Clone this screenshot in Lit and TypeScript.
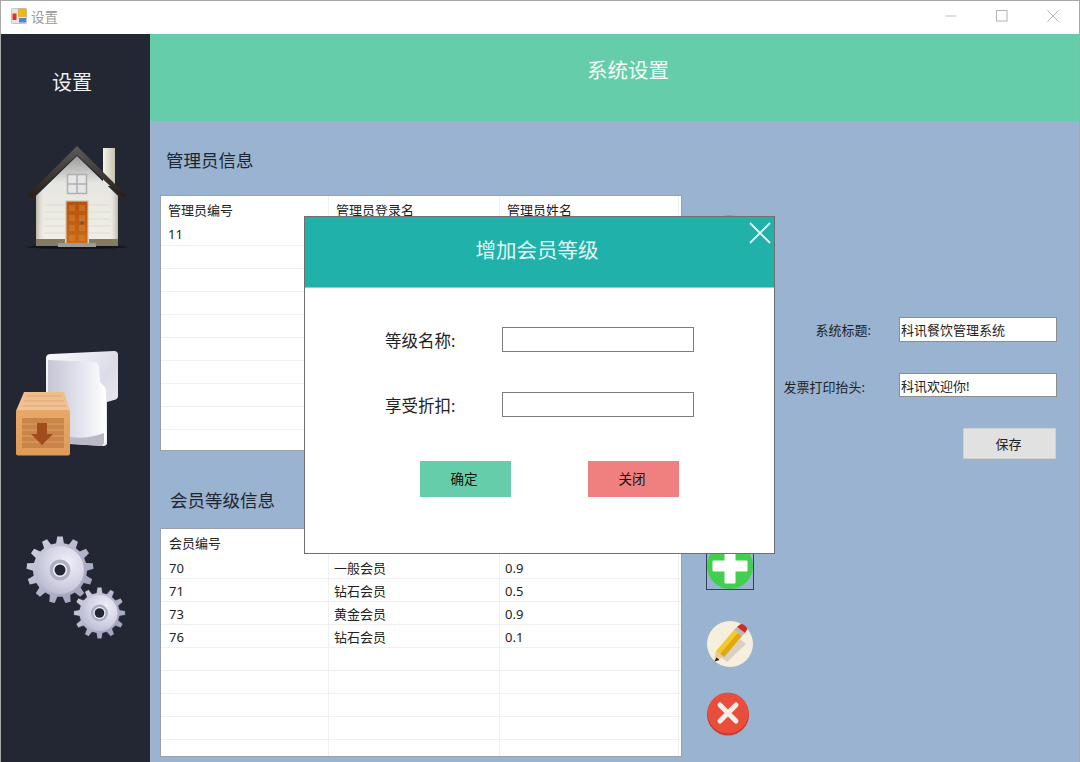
import { LitElement, html, css } from "lit";
import { customElement } from "lit/decorators.js";

const gear = (cx: number, cy: number, ro: number, ri: number, n: number) => {
  const pts: string[] = [];
  const step = (Math.PI * 2) / n;
  const pt = (r: number, a: number) => `${(cx + r * Math.cos(a)).toFixed(2)} ${(cy + r * Math.sin(a)).toFixed(2)}`;
  for (let i = 0; i < n; i++) {
    const a = i * step - Math.PI / 2;
    pts.push(pt(ri, a - step * 0.3), pt(ro, a - step * 0.17), pt(ro, a + step * 0.17), pt(ri, a + step * 0.3));
  }
  return `M${pts.join("L")}Z`;
};

const admin = [["11"], [], [], [], [], [], [], [], []];
const members = [
  ["70", "一般会员", "0.9"],
  ["71", "钻石会员", "0.5"],
  ["73", "黄金会员", "0.9"],
  ["76", "钻石会员", "0.1"],
  [], [], [], [], [],
];

@customElement("app-root")
export class AppRoot extends LitElement {
  static styles = css`
    :host {
      display: block;
      position: relative;
      width: 1080px;
      height: 762px;
      overflow: hidden;
      font-family: "Noto Sans", "Noto Sans CJK SC", sans-serif;
      color: #222;
    }
    * { box-sizing: border-box; }
    .window {
      width: 1080px;
      height: 762px;
      display: flex;
      flex-direction: column;
      border: 1px solid #a8a8a8;
      border-bottom: 0;
    }
    .titlebar {
      height: 33px;
      flex: none;
      background: #fff;
      display: flex;
      align-items: center;
      padding: 0 20px 3px 10px;
      font-size: 13.5px;
      color: #999;
    }
    .app-icon { margin-right: 4px; }
    .spacer { flex: 1; }
    .ctl { display: block; margin-left: 39px; }
    .body { flex: 1; display: flex; min-height: 0; }
    .sidebar {
      width: 149px;
      flex: none;
      background: #232733;
      display: flex;
      flex-direction: column;
      color: #eef0f2;
    }
    .side-title { font-size: 20px; line-height: 28px; text-align: center; margin: 35px 7px 0 0; }
    .sidebar svg { display: block; flex: none; }
    .ic-house { margin: 43px 0 0 21px; }
    .ic-box { margin: 95px 0 0 9px; }
    .ic-gear { margin: 72px 0 0 19px; }
    .main { flex: 1; min-width: 0; display: flex; flex-direction: column; background: #99b3d1; }
    .banner {
      height: 87px;
      flex: none;
      background: #66cdaa;
      color: #f4fbf8;
      font-size: 20.5px;
      display: flex;
      align-items: center;
      justify-content: center;
      padding: 0 0 17px 27px;
    }
    .content { flex: 1; display: flex; min-height: 0; padding-left: 10px; }
    .tables { width: 522px; flex: none; display: flex; flex-direction: column; }
    .sec { font-size: 17.5px; line-height: 24px; color: #1f2530; }
    .sec-a { margin: 27px 0 23px 6px; }
    .sec-b { margin: 37px 0 16px 10px; }
    .grid { background: #fff; border: 1px solid #9a9fa8; overflow: hidden; font-size: 13px; flex: none; }
    .grid-a { height: 256px; }
    .grid-b { height: 229px; }
    .row { display: grid; grid-template-columns: 168px 171px 179px; height: 23px; line-height: 22px; border-bottom: 1px solid #f0f0f0; }
    .grid-b .row { line-height: 24px; }
    .row.head, .grid-b .row.head { height: 27px; line-height: 28px; border-bottom: 0; }
    .cell { padding-left: 7px; border-right: 1px solid #f0f0f0; white-space: nowrap; overflow: hidden; }
    .grid-b .cell { padding-left: 5px; }
    .grid-b .cell:first-child { padding-left: 8px; }
    .tools { width: 50px; flex: none; margin-left: 23px; padding-top: 94px; display: flex; flex-direction: column; }
    .tool { display: block; flex: none; }
    .top-plus { margin-left: 2px; }
    .plus-box { width: 48px; height: 48px; margin: 281px 0 0 1px; border: 1px solid #33415a; display: flex; align-items: center; justify-content: center; }
    .pencil { margin: 31px 0 0 2px; }
    .del { margin: 25px 0 0 2px; }
    .settings { flex: 1; padding: 196px 22px 0 0; display: flex; flex-direction: column; font-size: 13px; }
    .set-row { display: flex; justify-content: flex-end; height: 25px; }
    .set-row + .set-row { margin-top: 31px; height: 24px; }
    .lab-a { margin-right: 28px; line-height: 27px; }
    .lab-b { margin-right: 34px; line-height: 28px; }
    .set-input {
      width: 158px;
      height: 100%;
      border: 1px solid #8d8d8d;
      background: #fff;
      font: inherit;
      color: #222;
      padding: 0 1px;
      outline: none;
      border-radius: 0;
    }
    .save {
      align-self: flex-end;
      margin: 31px 1px 0 0;
      width: 93px;
      height: 31px;
      background: #e1e1e1;
      border: 1px solid #cfd0d0;
      font: inherit;
      color: #222;
      padding: 0 2px 0 0;
    }
    .modal {
      position: absolute;
      left: 304px;
      top: 216px;
      width: 471px;
      height: 338px;
      background: #fff;
      border: 1px solid #6f6f6f;
      display: flex;
      flex-direction: column;
    }
    .modal-head {
      position: relative;
      height: 71px;
      flex: none;
      background: #20b2aa;
      border-bottom: 1px solid #7fd6d0;
      color: #e4f6f4;
      font-size: 20.5px;
      display: flex;
      align-items: center;
      justify-content: center;
      padding: 0 5px 6px 0;
    }
    .modal-x { position: absolute; right: 3px; top: 5px; display: block; }
    .modal-form {
      padding: 39px 0 0 80px;
      display: grid;
      grid-template-columns: 117px 192px;
      row-gap: 40px;
      align-items: center;
      font-size: 16.5px;
      color: #222;
    }
    .modal-input { width: 192px; height: 25px; border: 1px solid #7d7d7d; background: #fff; padding: 0; outline: none; border-radius: 0; }
    .modal-btns { display: flex; gap: 77px; padding: 44px 0 0 115px; }
    .btn { width: 91px; height: 36px; border: 0; padding: 0 3px 2px 0; font: inherit; font-size: 13.5px; color: #111; }
    .ok { background: #66cdaa; }
    .cancel { background: #f08080; }
  `;

  private grid(cls: string, head: string[], rows: string[][]) {
    return html`<div class="grid ${cls}">
      <div class="row head">${head.map((h) => html`<div class="cell">${h}</div>`)}</div>
      ${rows.map(
        (r) => html`<div class="row">${[0, 1, 2].map((i) => html`<div class="cell">${r[i] ?? ""}</div>`)}</div>`
      )}
    </div>`;
  }

  private plus(cls = "") {
    return html`<svg class="tool ${cls}" width="46" height="46" viewBox="0 0 46 46">
      <circle cx="23" cy="23" r="23" fill="#41cf4c"></circle>
      <path d="M18 6h10v12h12v10H28v12H18V28H6V18h12z" fill="#fff" stroke="#fff" stroke-linejoin="round" stroke-width="1"></path>
    </svg>`;
  }

  render() {
    return html`
      <div class="window">
        <div class="titlebar">
          <svg class="app-icon" width="16" height="16" viewBox="0 0 16 16">
            <rect x="0.5" y="0.5" width="15" height="15" rx="1" fill="#e4e4e4" stroke="#c4c4c4"></rect>
            <rect x="7.5" y="1" width="7.5" height="7.5" fill="#f2b90f" stroke="#d99a00" stroke-width=".5"></rect>
            <rect x="1.5" y="5.5" width="4" height="6.5" fill="#d8352f"></rect>
            <rect x="8" y="10" width="7" height="4.5" fill="#4d86d6"></rect>
          </svg>
          <span>设置</span>
          <div class="spacer"></div>
          <svg class="ctl" width="12" height="12" viewBox="0 0 12 12"><path d="M1 6h10.5" stroke="#c8c8c8" stroke-width="1.2"></path></svg>
          <svg class="ctl" width="12" height="12" viewBox="0 0 12 12"><rect x=".5" y=".5" width="10.5" height="10.5" fill="none" stroke="#b4b4b4"></rect></svg>
          <svg class="ctl" width="12" height="12" viewBox="0 0 12 12"><path d="M.5.5l11 11M11.5.5l-11 11" stroke="#b4b4b4" stroke-width="1"></path></svg>
        </div>
        <div class="body">
          <aside class="sidebar">
            <div class="side-title">设置</div>
            <svg class="ic-house" width="110" height="110" viewBox="22 140 110 110">
              <defs>
                <linearGradient id="wall" x1="0" y1="0" x2="0" y2="1">
                  <stop offset="0" stop-color="#9a9a9a"></stop><stop offset=".3" stop-color="#e6e6e2"></stop><stop offset="1" stop-color="#f2f0e6"></stop>
                </linearGradient>
                <linearGradient id="wallx" x1="0" y1="0" x2="1" y2="0">
                  <stop offset="0" stop-color="#8f8a72" stop-opacity=".55"></stop><stop offset=".12" stop-color="#fff" stop-opacity="0"></stop><stop offset=".88" stop-color="#fff" stop-opacity="0"></stop><stop offset="1" stop-color="#8f8a72" stop-opacity=".55"></stop>
                </linearGradient>
                <linearGradient id="roof" x1="0" y1="0" x2="0" y2="1">
                  <stop offset="0" stop-color="#5c5c5c"></stop><stop offset="1" stop-color="#2a1d12"></stop>
                </linearGradient>
                <linearGradient id="chim" x1="0" y1="0" x2="1" y2="0">
                  <stop offset="0" stop-color="#f6f4ea"></stop><stop offset="1" stop-color="#c6c2b0"></stop>
                </linearGradient>
                <linearGradient id="door" x1="0" y1="0" x2="0" y2="1">
                  <stop offset="0" stop-color="#b4520f"></stop><stop offset="1" stop-color="#cb6a18"></stop>
                </linearGradient>
              </defs>
              <ellipse cx="77" cy="247" rx="50" ry="2" fill="#000" opacity=".45"></ellipse>
              <rect x="103" y="148" width="12" height="38" fill="url(#chim)"></rect>
              <path d="M36 196L77 156l41 40v50H36z" fill="url(#wall)"></path>
              <path d="M36 196L77 156l41 40v50H36z" fill="url(#wallx)"></path>
              <path d="M44 205h66M44 212h66M44 219h66M44 226h66M44 233h66" stroke="#dfddd2" stroke-width="1"></path>
              <path d="M36 239h82v7H36z" fill="#857a62"></path>
              <path d="M27 196L77 146l50 50-5 1L77 155 32 197z" fill="url(#roof)"></path>
              <rect x="67.5" y="174.5" width="19" height="19" fill="#e6e6e6" stroke="#b0b0b0" stroke-width="1.5"></rect>
              <path d="M77 175v18M68 184h18" stroke="#b0b0b0" stroke-width="1.5"></path>
              <rect x="65" y="200" width="24" height="43" fill="#d9d6c8"></rect>
              <rect x="66.5" y="201.5" width="21" height="41.5" fill="url(#door)"></rect>
              <g fill="#d98a3c" opacity=".45">
                <rect x="69" y="205" width="6" height="6"></rect><rect x="79" y="205" width="6" height="6"></rect>
                <rect x="69" y="215" width="6" height="6"></rect><rect x="79" y="215" width="6" height="6"></rect>
                <rect x="69" y="225" width="6" height="6"></rect><rect x="79" y="225" width="6" height="6"></rect>
                <rect x="69" y="235" width="6" height="6"></rect><rect x="79" y="235" width="6" height="6"></rect>
              </g>
              <circle cx="82" cy="223" r="1.5" fill="#555"></circle>
              <rect x="58" y="243" width="38" height="4" fill="#9b9b9b"></rect>
            </svg>
            <svg class="ic-box" width="115" height="115" viewBox="10 345 115 115">
              <defs>
                <linearGradient id="fold" x1="0" y1="0" x2="1" y2="1">
                  <stop offset="0" stop-color="#fbfbfe"></stop><stop offset=".55" stop-color="#dcdce8"></stop><stop offset="1" stop-color="#f4f4fa"></stop>
                </linearGradient>
                <linearGradient id="flap" x1="0" y1="0" x2="1" y2="0">
                  <stop offset="0" stop-color="#c5c5d4"></stop><stop offset=".6" stop-color="#e6e6f0"></stop><stop offset="1" stop-color="#fff"></stop>
                </linearGradient>
                <linearGradient id="crate" x1="0" y1="0" x2="0" y2="1">
                  <stop offset="0" stop-color="#e8a868"></stop><stop offset="1" stop-color="#e09a58"></stop>
                </linearGradient>
                <linearGradient id="cratetop" x1="0" y1="0" x2="0" y2="1">
                  <stop offset="0" stop-color="#eebd8a"></stop><stop offset="1" stop-color="#f0c498"></stop>
                </linearGradient>
              </defs>
              <path d="M46 358q0-4 5-4l63-3q4 0 4 4v41q0 3-4 4l-7 2v41q0 3-4 3l-50-3H52q-6-2-6-6z" fill="url(#fold)"></path>
              <path d="M48 360l46 2q4 0 5 5l1 15 4 4q2 2 2 6v50l-3 2-31-3q-14-1-24-12z" fill="url(#flap)"></path>
              <path d="M60 434q20 8 44-1v10l-2 3-40-3z" fill="#b9b9c8"></path>
              <path d="M24 392h40l6 19H16z" fill="url(#cratetop)"></path>
              <path d="M26 396h36M24 401h40M22 406h44" stroke="#dca672" stroke-width="1"></path>
              <rect x="16" y="410" width="54" height="45.5" rx="2" fill="url(#crate)"></rect>
              <rect x="22" y="418" width="42" height="30" fill="#c98448"></rect>
              <path d="M22 424h42M22 430h42M22 436h42M22 442h42" stroke="#dca06a" stroke-width="1"></path>
              <path d="M37 423h10v11h6l-11 11-11-11h6z" fill="#a04c1d"></path>
            </svg>
            <svg class="ic-gear" width="110" height="110" viewBox="20 532 110 110">
              <defs>
                <linearGradient id="g1" x1="0" y1="0" x2="1" y2="1">
                  <stop offset="0" stop-color="#d8d8e6"></stop><stop offset=".5" stop-color="#b4b4cc"></stop><stop offset="1" stop-color="#9c9cb6"></stop>
                </linearGradient>
                <radialGradient id="g2" cx=".65" cy=".35" r=".8">
                  <stop offset="0" stop-color="#f0f0f8"></stop><stop offset=".6" stop-color="#d0d0e2"></stop><stop offset="1" stop-color="#b2b2cc"></stop>
                </radialGradient>
              </defs>
              <path d="${gear(60, 570, 33.5, 27, 13)}" fill="url(#g1)"></path>
              <circle cx="60" cy="570" r="24" fill="url(#g2)"></circle>
              <circle cx="60" cy="570" r="10.5" fill="#aeaec4"></circle>
              <circle cx="60" cy="570" r="7" fill="#f4f4fa"></circle>
              <circle cx="60" cy="570" r="5.5" fill="#232733"></circle>
              <path d="${gear(99.5, 613, 26, 20.5, 12)}" fill="url(#g1)" stroke="#232733" stroke-width=".8"></path>
              <circle cx="99.5" cy="613" r="18" fill="url(#g2)"></circle>
              <circle cx="99.5" cy="613" r="8.5" fill="#aeaec4"></circle>
              <circle cx="99.5" cy="613" r="6" fill="#f4f4fa"></circle>
              <circle cx="99.5" cy="613" r="4.8" fill="#232733"></circle>
            </svg>
          </aside>
          <div class="main">
            <div class="banner">系统设置</div>
            <div class="content">
              <div class="tables">
                <div class="sec sec-a">管理员信息</div>
                ${this.grid("grid-a", ["管理员编号", "管理员登录名", "管理员姓名"], admin)}
                <div class="sec sec-b">会员等级信息</div>
                ${this.grid("grid-b", ["会员编号", "等级名称", "享受折扣"], members)}
              </div>
              <div class="tools">
                ${this.plus("top-plus")}
                <div class="plus-box">${this.plus()}</div>
                <svg class="tool pencil" width="46" height="46" viewBox="0 0 46 46">
                  <circle cx="23" cy="23" r="23" fill="#f7efdd"></circle>
                  <path d="M10 36l18-19 6 5-19 18z" fill="#000" opacity=".12" transform="translate(5 1)"></path>
                  <path d="M27 9l8 6-18 21-8-6z" fill="#f4c92e"></path>
                  <path d="M31 12l4 3-18 21-4-3z" fill="#e3a614"></path>
                  <path d="M9 30l8 6-10 4z" fill="#e9c89a"></path>
                  <path d="M9.5 36.5l3 2.5-5 1.5z" fill="#222"></path>
                  <path d="M27 9l3-3 8 6-3 3z" fill="#b9b9b9"></path>
                  <path d="M30 6l3-2.5q2-1 4 .5l2 1.5q2 2 .5 4L38 12z" fill="#cf2a2a"></path>
                </svg>
                <svg class="tool del" width="42" height="44" viewBox="0 0 42 44">
                  <circle cx="21" cy="22.5" r="21" fill="#c93b2c"></circle>
                  <circle cx="21" cy="21" r="20.5" fill="#e94e3d"></circle>
                  <path d="M13 13l16 16M29 13L13 29" stroke="#f6ece8" stroke-width="5" stroke-linecap="round"></path>
                </svg>
              </div>
              <div class="settings">
                <div class="set-row">
                  <span class="lab-a">系统标题:</span>
                  <input class="set-input" .value=${"科讯餐饮管理系统"} />
                </div>
                <div class="set-row">
                  <span class="lab-b">发票打印抬头:</span>
                  <input class="set-input" .value=${"科讯欢迎你!"} />
                </div>
                <button class="save">保存</button>
              </div>
            </div>
          </div>
        </div>
      </div>
      <div class="modal">
        <div class="modal-head">
          增加会员等级
          <svg class="modal-x" width="22" height="22" viewBox="0 0 22 22"><path d="M1 1l20 20M21 1L1 21" stroke="#e8f8f6" stroke-width="1.8"></path></svg>
        </div>
        <div class="modal-form">
          <span>等级名称:</span><input class="modal-input" />
          <span>享受折扣:</span><input class="modal-input" />
        </div>
        <div class="modal-btns">
          <button class="btn ok">确定</button>
          <button class="btn cancel">关闭</button>
        </div>
      </div>
    `;
  }
}
